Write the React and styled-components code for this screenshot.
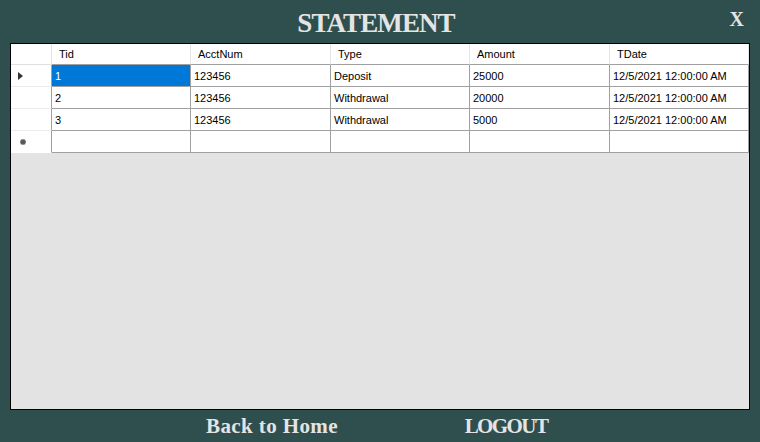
import React from 'react';
import styled, { createGlobalStyle } from 'styled-components';

const columns = [
  { name: 'Tid', key: 'tid', width: 139 },
  { name: 'AcctNum', key: 'acct', width: 140 },
  { name: 'Type', key: 'type', width: 139 },
  { name: 'Amount', key: 'amount', width: 140 },
  { name: 'TDate', key: 'date', width: 139 },
];

const rows = [
  { tid: '1', acct: '123456', type: 'Deposit', amount: '25000', date: '12/5/2021 12:00:00 AM' },
  { tid: '2', acct: '123456', type: 'Withdrawal', amount: '20000', date: '12/5/2021 12:00:00 AM' },
  { tid: '3', acct: '123456', type: 'Withdrawal', amount: '5000', date: '12/5/2021 12:00:00 AM' },
];

const template = `41px ${columns.map((c) => c.width + 'px').join(' ')}`;

function CurrentRowArrow() {
  return (
    <svg width="5" height="8" viewBox="0 0 5 8">
      <path d="M0 0 L5 4 L0 8 Z" fill="#333" />
    </svg>
  );
}

function NewRowMark() {
  return (
    <svg width="6" height="6" viewBox="0 0 6 6">
      <path d="M3 0 V6 M0 3 H6 M0.8 0.8 L5.2 5.2 M5.2 0.8 L0.8 5.2" stroke="#555" strokeWidth="1.3" />
    </svg>
  );
}

function App() {
  return (
    <>
      <GlobalStyle />
      <Window>
        <TitleBar>
          <span />
          <Title>STATEMENT</Title>
          <CloseButton>X</CloseButton>
        </TitleBar>
        <GridPanel>
          <Table $template={template}>
            <CornerCell />
            {columns.map((c) => (
              <HeaderCell key={c.key}>{c.name}</HeaderCell>
            ))}
            {rows.map((r, i) => (
              <React.Fragment key={r.tid}>
                <RowHeader>{i === 0 && <CurrentRowArrow />}</RowHeader>
                {columns.map((c, j) => (
                  <Cell key={c.key} $selected={i === 0 && j === 0}>
                    {r[c.key]}
                  </Cell>
                ))}
              </React.Fragment>
            ))}
            <RowHeader $last>
              <NewRowMark />
            </RowHeader>
            {columns.map((c) => (
              <Cell key={c.key} />
            ))}
          </Table>
        </GridPanel>
        <Footer>
          <FooterButton $width={152} $spacing={0.4}>Back to Home</FooterButton>
          <FooterButton $width={140} $spacing={-1.6}>LOGOUT</FooterButton>
        </Footer>
      </Window>
    </>
  );
}

export default App;

const GlobalStyle = createGlobalStyle`
  body {
    margin: 0;
    background: #2f4f4f;
  }
`;

const Window = styled.div`
  width: 760px;
  height: 442px;
  background: #2f4f4f;
  display: flex;
  flex-direction: column;
  overflow: hidden;
`;

const TitleBar = styled.div`
  height: 43px;
  display: grid;
  grid-template-columns: 1fr auto 1fr;
  align-items: start;
`;

const Title = styled.div`
  padding: 10px 8px 0 0;
  font-family: "Liberation Serif", serif;
  font-weight: bold;
  font-size: 27px;
  line-height: 27px;
  letter-spacing: -0.9px;
  color: #e4e4e4;
`;

const CloseButton = styled.div`
  justify-self: end;
  padding: 9px 17px 0 0;
  font-family: "Liberation Serif", serif;
  font-weight: bold;
  font-size: 20px;
  line-height: 20px;
  letter-spacing: -1px;
  color: #e4e4e4;
  cursor: pointer;
`;

const GridPanel = styled.div`
  margin: 0 10px;
  height: 367px;
  box-sizing: border-box;
  border: 1px solid #000;
  background: #e3e3e3;
`;

const Table = styled.div`
  display: grid;
  grid-template-columns: ${(p) => p.$template};
  grid-auto-rows: 22px;
  grid-template-rows: 21px;
  font-family: "Liberation Sans", Arial, sans-serif;
  font-size: 11px;
  color: #000;
  background: #fff;
`;

const CornerCell = styled.div`
  box-sizing: border-box;
  border-right: 1px solid #e5e5e5;
  border-bottom: 1px solid #e0e0e0;
`;

const HeaderCell = styled.div`
  box-sizing: border-box;
  padding: 1px 0 0 7px;
  line-height: 19px;
  border-right: 1px solid #e5e5e5;
  border-bottom: 1px solid #a0a0a0;
  white-space: nowrap;
  overflow: hidden;
`;

const RowHeader = styled.div`
  box-sizing: border-box;
  display: flex;
  align-items: center;
  padding: 0 0 0 ${(p) => (p.$last ? 9 : 7)}px;
  border-right: 1px solid #a0a0a0;
  border-bottom: 1px solid ${(p) => (p.$last ? '#fff' : '#ececec')};
`;

const Cell = styled.div`
  box-sizing: border-box;
  padding: 1px 0 0 3px;
  line-height: 20px;
  border-right: 1px solid #a0a0a0;
  border-bottom: 1px solid #a0a0a0;
  white-space: nowrap;
  overflow: hidden;
  background: ${(p) => (p.$selected ? '#0078d7' : '#fff')};
  color: ${(p) => (p.$selected ? '#fff' : '#000')};
`;

const Footer = styled.div`
  flex: 1;
  display: flex;
  align-items: center;
  padding-left: 196px;
  gap: 88px;
`;

const FooterButton = styled.div`
  width: ${(p) => p.$width}px;
  text-align: center;
  font-family: "Liberation Serif", serif;
  font-weight: bold;
  font-size: 21px;
  line-height: 21px;
  letter-spacing: ${(p) => p.$spacing}px;
  color: #e4e4e4;
  cursor: pointer;
`;
